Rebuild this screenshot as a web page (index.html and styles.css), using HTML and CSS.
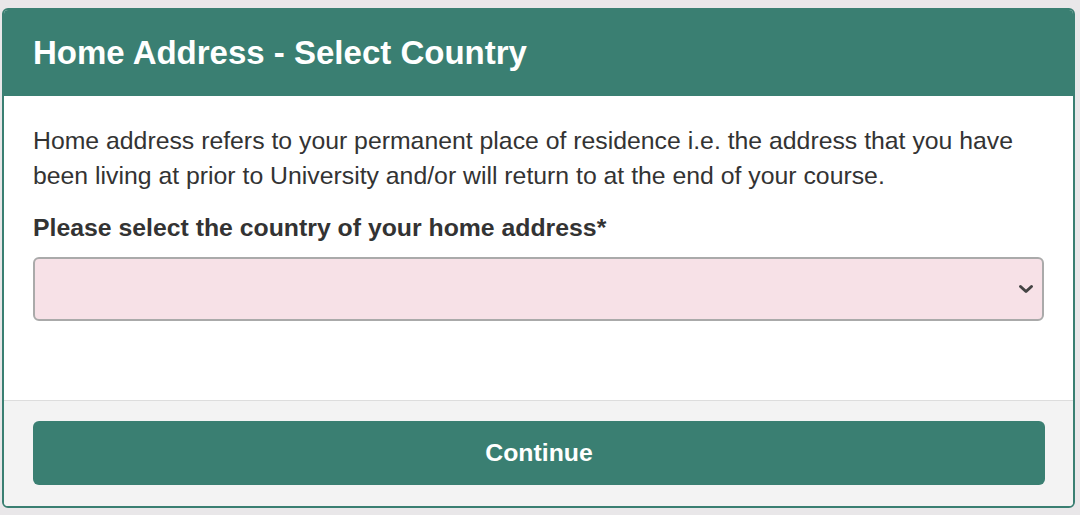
FILE: index.html
```html
<!DOCTYPE html>
<html>
    <head>
        <meta charset="utf-8">
        <title>Home Address - Select Country</title>
        <link rel="stylesheet" href="styles.css">
    </head>
    <body>
        <main class="panel">
            <header class="panel-head">
                <h1>Home Address - Select Country</h1>
            </header>
            <section class="panel-body">
                <p>Home address refers to your permanent place of residence i.e. the address that you have been living at prior to University and/or will return to at the end of your course.</p>
                <label for="country">Please select the country of your home address*</label>
                <div class="select-wrap">
                    <select id="country">
                        <option></option>
                    </select>
                    <svg class="chevron" width="16" height="10" viewBox="0 0 16 10"><path d="M2.5 2.5 L8 7.5 L13.5 2.5" fill="none" stroke="#444" stroke-width="3" stroke-linecap="round" stroke-linejoin="round"/></svg>
                </div>
            </section>
            <footer class="panel-foot">
                <button type="button">Continue</button>
            </footer>
        </main>
    </body>
</html>
```

FILE: styles.css
```css
html {background:#e9e7e9;}
body {margin:0;padding:8px 5px 7px 2px;font-family:"Liberation Sans", Arial, sans-serif;color:#333;}
.panel {border:2px solid #3a7f72;border-radius:6px;background:#fff;overflow:hidden;}
.panel-head {background:#3a7f72;color:#fff;height:86px;display:flex;align-items:center;padding:0 29px;}
.panel-head h1 {margin:0;font-size:33px;font-weight:bold;}
.panel-body {padding:27px 29px 79px;}
.panel-body p {margin:0 0 20px;font-size:24.8px;line-height:35px;}
.panel-body label {display:block;font-size:24.8px;line-height:30px;font-weight:bold;margin-bottom:14px;}
.select-wrap {position:relative;}
.select-wrap select {display:block;width:100%;height:64px;background:#f7e1e7;border:2px solid #aaa;border-radius:6px;appearance:none;-webkit-appearance:none;font-size:24px;}
.chevron {position:absolute;right:10px;top:27px;}
.panel-foot {background:#f3f3f3;border-top:1px solid #ddd;padding:20px 28px 21px 29px;}
.panel-foot button {display:block;width:100%;height:64px;background:#3a7f72;color:#fff;border:none;border-radius:6px;font-family:inherit;font-size:24.8px;font-weight:bold;}
```
